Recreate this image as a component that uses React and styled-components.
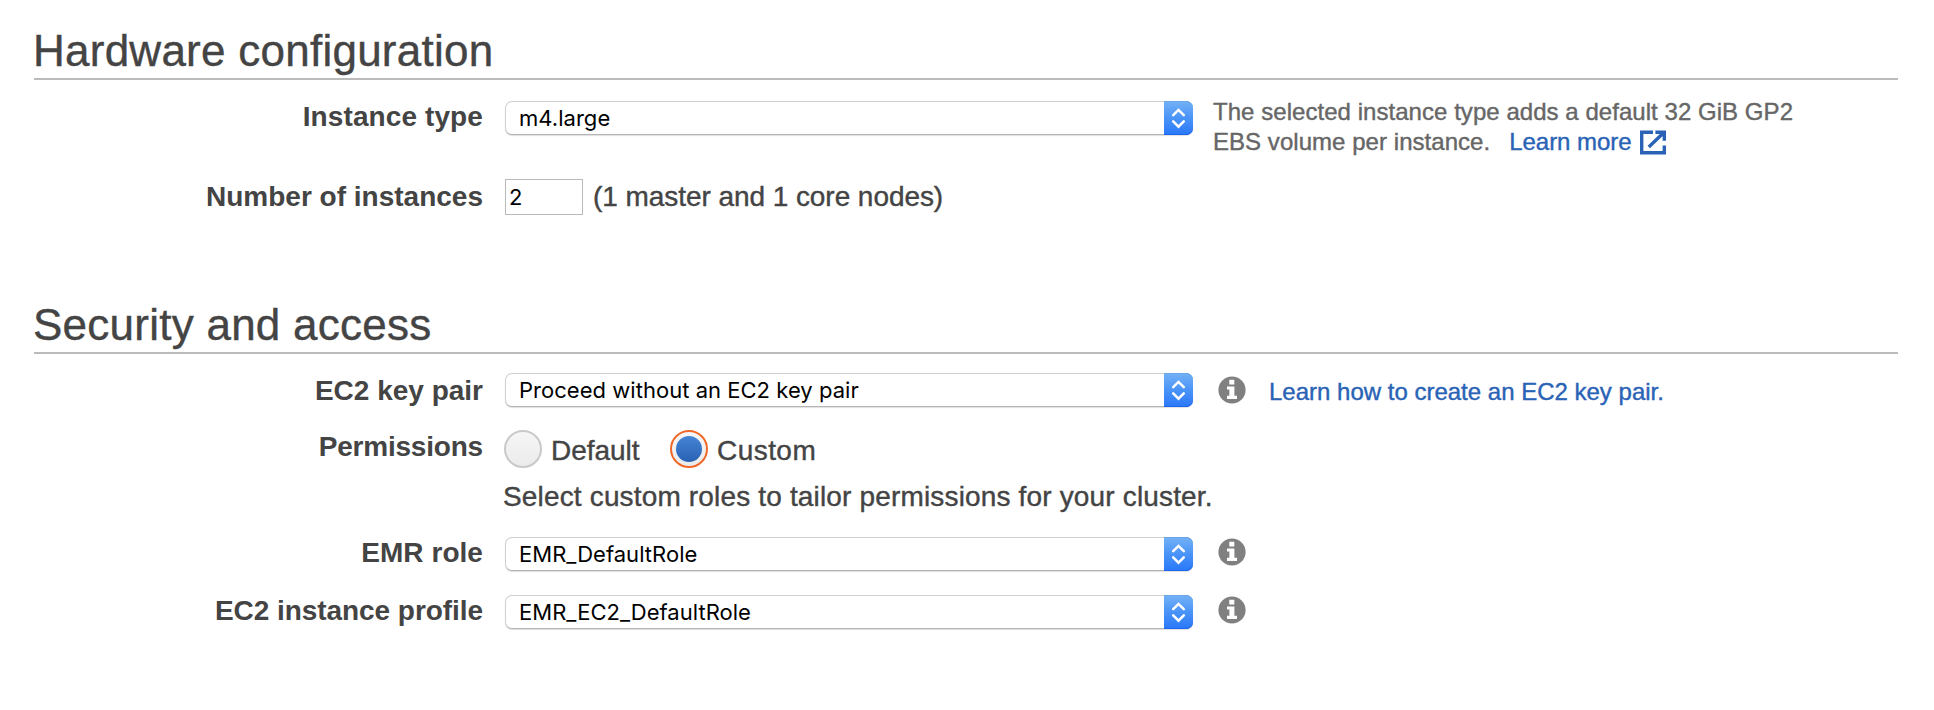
import React from "react";
import styled, { createGlobalStyle } from "styled-components";

const GlobalStyle = createGlobalStyle`
  body {
    margin: 0;
    background: #fff;
    color: #444;
    font-family: "Liberation Sans", Arial, sans-serif;
  }
`;

const Page = styled.main`
  box-sizing: border-box;
  min-height: 710px;
  padding: 25px 36px 0 34px;
  display: flex;
  flex-direction: column;
  gap: 84px;
`;

const Section = styled.section`
  display: flex;
  flex-direction: column;
`;

const Heading = styled.h2`
  margin: 0 0 17px;
  padding-bottom: 2px;
  border-bottom: 2px solid #bbb;
  font-size: 44px;
  font-weight: 400;
  line-height: 51px;
  letter-spacing: 0.25px;
  text-indent: -1px;
  -webkit-text-stroke: 0.4px currentColor;
`;

const Row = styled.div`
  display: flex;
  align-items: flex-start;
  height: ${(p) => p.$height}px;
`;

const Label = styled.label`
  width: 449px;
  margin: 2px 22px 0 0;
  text-align: right;
  font-size: 28px;
  font-weight: 700;
  line-height: 35px;
  letter-spacing: ${(p) => p.$tracking ?? 0}px;
  white-space: nowrap;
`;

const SelectBox = styled.div`
  box-sizing: border-box;
  display: flex;
  justify-content: space-between;
  width: 688px;
  height: 34px;
  margin-top: ${(p) => p.$drop}px;
  border: 1px solid #d0d0d0;
  border-bottom-color: #b4b4b4;
  border-radius: 7px;
  box-shadow: 0 1px 1px rgba(0, 0, 0, 0.13);
  background: #fff;
`;

const SelectValue = styled.span`
  padding-left: 13px;
  color: #000;
  font-family: Inter, sans-serif;
  font-size: 22px;
  line-height: 32px;
  letter-spacing: 0.03px;
  white-space: nowrap;
`;

const SelectButton = styled.span`
  width: 29px;
  height: 34px;
  margin: -1px -1px 0 0;
  border-radius: 0 7px 7px 0;
  background: linear-gradient(#74b2f6, #4a94f8 50%, #2877f8);
  box-shadow: inset 0 1px 0 #69a5e8, inset 0 -1px 0 #1f66ee;

  svg {
    display: block;
  }
`;

const CountInput = styled.input`
  box-sizing: border-box;
  width: 78px;
  height: 36px;
  margin: 2px 10px 0 0;
  padding: 0 3px;
  border: 1px solid #b9b9b9;
  border-radius: 0;
  outline: none;
  background: #fff;
  color: #000;
  font-family: Inter, sans-serif;
  font-size: 22px;
`;

const FieldText = styled.span`
  margin-top: ${(p) => p.$drop ?? 2}px;
  font-size: 28px;
  line-height: 35px;
  letter-spacing: ${(p) => p.$tracking ?? 0}px;
  white-space: nowrap;
  -webkit-text-stroke: 0.4px currentColor;
`;

const Note = styled.p`
  margin: 0 0 0 20px;
  color: #666;
  font-size: 24px;
  line-height: 30px;
  letter-spacing: 0.045px;
  white-space: nowrap;
  -webkit-text-stroke: 0.4px currentColor;
`;

const Link = styled.a`
  color: #2a63b5;
  text-decoration: none;
  letter-spacing: 0;
  -webkit-text-stroke: 0.4px currentColor;
`;

const NoteLink = styled(Link)`
  margin-left: 19px;
  letter-spacing: -0.05px;

  svg {
    margin-left: 9px;
    vertical-align: -5px;
  }
`;

const HintLink = styled(Link)`
  margin: 6px 0 0 23px;
  font-size: 24px;
  line-height: 30px;
  white-space: nowrap;
`;

const InfoBadge = styled.svg`
  flex: none;
  margin: 5px 0 0 25px;
`;

const Stack = styled.div`
  display: flex;
  flex-direction: column;
  margin: 3px 0 0 -2px;
`;

const RadioGroup = styled.div`
  display: flex;
  height: 46px;
  padding-left: 1px;
`;

const RadioOption = styled.label`
  display: flex;
  width: ${(p) => p.$width};
`;

const Radio = styled.span`
  box-sizing: border-box;
  display: flex;
  align-items: center;
  justify-content: center;
  width: 38px;
  height: 38px;
  margin-right: 9px;
  border: 2px solid ${(p) => (p.$checked ? "#f0692a" : "#c9c9c9")};
  border-radius: 50%;
  background: linear-gradient(#f6f6f6, #ebebeb);
`;

const RadioDot = styled.span`
  width: 26px;
  height: 26px;
  border-radius: 50%;
  background: linear-gradient(#4584d6, #2a62b4);
`;

function Select({ value, drop = 4 }) {
  return (
    <SelectBox role="combobox" $drop={drop}>
      <SelectValue>{value}</SelectValue>
      <SelectButton>
        <svg width="29" height="34" viewBox="0 0 29 34" fill="none" stroke="#fff" strokeWidth="2.5">
          <path d="M9.2 14.2 14.5 8.9l5.3 5.3M9.2 20.4l5.3 5.3 5.3-5.3" strokeLinecap="round" />
        </svg>
      </SelectButton>
    </SelectBox>
  );
}

function Info() {
  return (
    <InfoBadge width="28" height="28" viewBox="0 0 28 28">
      <circle cx="14" cy="14" r="13.6" fill="#808080" />
      <path
        d="M11.3 3.7h5v4.8h-5zM9 10.4h7.4v9.4H19V23H9v-3.2h2.4v-6.2H9z"
        fill="#fff"
      />
    </InfoBadge>
  );
}

function ExternalIcon() {
  return (
    <svg width="26" height="25" viewBox="0 0 26 25" fill="none" stroke="#2a63b5" strokeWidth="3.4">
      <path d="M13 2.2H1.7v20.6h22.6V15.4M15.4 2.2h8.9v8.6M8.8 16.9 23.6 2.8" />
    </svg>
  );
}

export default function App() {
  return (
    <>
      <GlobalStyle />
      <Page>
        <Section>
          <Heading>Hardware configuration</Heading>
          <Row $height={80}>
            <Label $tracking={0.1}>Instance type</Label>
            <Select value="m4.large" />
            <Note>
              The selected instance type adds a default 32 GiB GP2
              <br />
              EBS volume per instance.
              <NoteLink href="#">
                Learn more
                <ExternalIcon />
              </NoteLink>
            </Note>
          </Row>
          <Row $height={38}>
            <Label>Number of instances</Label>
            <CountInput defaultValue="2" />
            <FieldText $tracking={-0.06}>(1 master and 1 core nodes)</FieldText>
          </Row>
        </Section>
        <Section>
          <Heading>Security and access</Heading>
          <Row $height={56}>
            <Label>EC2 key pair</Label>
            <Select value="Proceed without an EC2 key pair" drop={2} />
            <Info />
            <HintLink href="#">Learn how to create an EC2 key pair.</HintLink>
          </Row>
          <Row $height={106}>
            <Label $tracking={-0.2}>Permissions</Label>
            <Stack>
              <RadioGroup>
                <RadioOption $width="166px">
                  <Radio />
                  <FieldText $drop={3} $tracking={-0.05}>Default</FieldText>
                </RadioOption>
                <RadioOption>
                  <Radio $checked>
                    <RadioDot />
                  </Radio>
                  <FieldText $drop={3} $tracking={0.45}>Custom</FieldText>
                </RadioOption>
              </RadioGroup>
              <FieldText $drop={3} $tracking={0.16}>
                Select custom roles to tailor permissions for your cluster.
              </FieldText>
            </Stack>
          </Row>
          <Row $height={58}>
            <Label $tracking={0.05}>EMR role</Label>
            <Select value="EMR_DefaultRole" />
            <Info />
          </Row>
          <Row $height={58}>
            <Label $tracking={-0.06}>EC2 instance profile</Label>
            <Select value="EMR_EC2_DefaultRole" />
            <Info />
          </Row>
        </Section>
      </Page>
    </>
  );
}
